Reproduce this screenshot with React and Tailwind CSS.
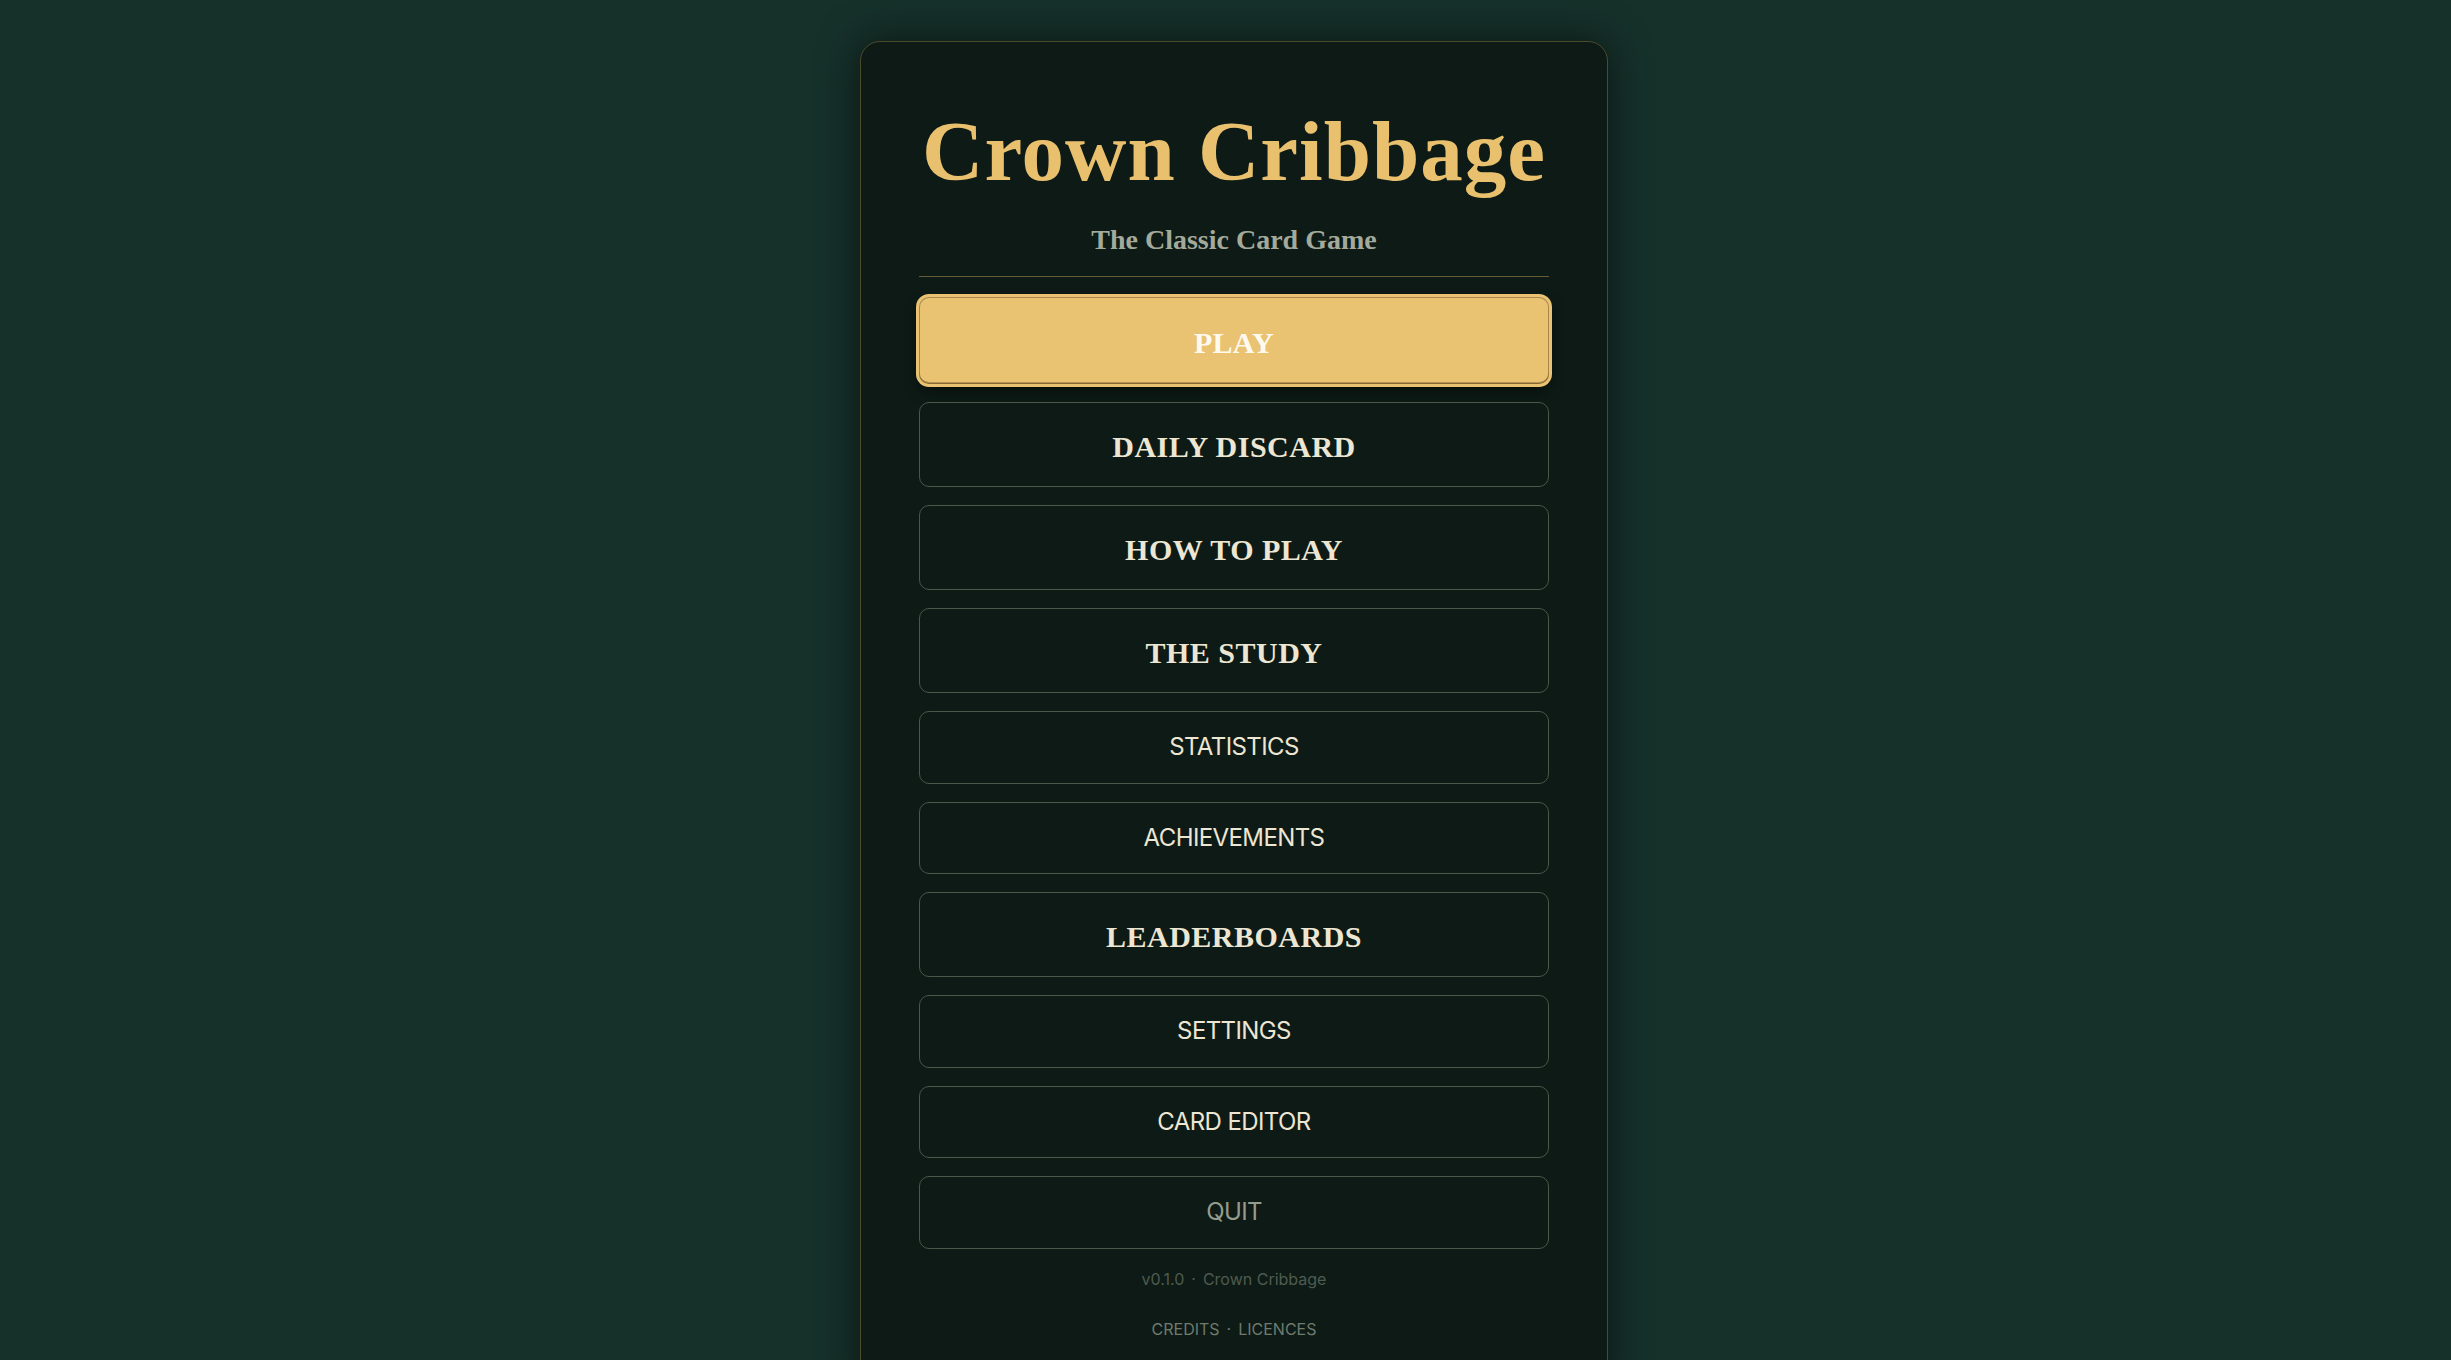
import React from "react";

const serif = "font-['Liberation_Serif','Times_New_Roman',serif]";
const sans = "font-['Inter','Liberation_Sans',sans-serif]";

const menuItems = [
  { label: "PLAY", kind: "primary" },
  { label: "DAILY DISCARD", kind: "serif" },
  { label: "HOW TO PLAY", kind: "serif" },
  { label: "THE STUDY", kind: "serif" },
  { label: "STATISTICS", kind: "sans" },
  { label: "ACHIEVEMENTS", kind: "sans" },
  { label: "LEADERBOARDS", kind: "serif" },
  { label: "SETTINGS", kind: "sans" },
  { label: "CARD EDITOR", kind: "sans" },
  { label: "QUIT", kind: "quit" },
];

function MenuButton({ label, kind }) {
  if (kind === "primary") {
    return (
      <button
        type="button"
        className={`${serif} flex h-[87px] w-full items-center justify-center rounded-[10px] bg-[#e9c272] pt-1 text-[30px] font-bold leading-none tracking-[0.3px] text-[#fffaf0] ring-3 ring-[#e9c272] shadow-[inset_0_0_0_1px_rgba(40,30,10,0.35),inset_0_-2px_0_rgba(90,60,20,0.35),0_6px_14px_rgba(0,0,0,0.55)]`}
      >
        {label}
      </button>
    );
  }

  if (kind === "serif") {
    return (
      <button
        type="button"
        className={`${serif} flex h-[85px] w-full items-center justify-center rounded-[10px] border border-[#4b5749] bg-[#0d1a15] pt-1 text-[30px] font-bold leading-none tracking-[0.5px] text-[#ece6d3]`}
      >
        {label}
      </button>
    );
  }

  return (
    <button
      type="button"
      className={`${sans} flex h-[72.5px] w-full items-center justify-center rounded-[10px] border border-[#4b5749] bg-[#0d1a15] text-[24px] leading-none tracking-[-0.6px] ${
        kind === "quit" ? "text-[#969c8c]" : "text-[#ece6d3]"
      }`}
    >
      {label}
    </button>
  );
}

export default function App() {
  return (
    <div className="flex min-h-screen justify-center bg-[#16302a] pb-10 pl-[17px] pt-[41px]">
      <div className="flex w-[748px] flex-col rounded-[20px] border border-[#4d4a2c] bg-[#0d1a15] px-[58px] pb-[58px] pt-[67px] shadow-[0_0_40px_rgba(0,0,0,0.55)]">
        <h1
          className={`${serif} text-center text-[85px] font-bold leading-[85px] tracking-[1px] text-[#e9c06e]`}
        >
          Crown Cribbage
        </h1>
        <p className={`${serif} mt-[32px] text-center text-[28px] font-bold leading-[28px] text-[#a3aa9c]`}>
          The Classic Card Game
        </p>
        <div className="mt-[22px] h-px w-full bg-[#665a37]" />

        <div className="mt-5 flex flex-col gap-[18px]">
          {menuItems.map((item) => (
            <MenuButton key={item.label} label={item.label} kind={item.kind} />
          ))}
        </div>

        <p className={`${sans} mt-[18px] text-center text-[16px] leading-6 text-[#4f5b50]`}>
          v0.1.0<span className="mx-[7px]">·</span>Crown Cribbage
        </p>
        <p className={`${sans} mt-[26px] text-center text-[16px] leading-6 text-[#6f7a6e]`}>
          CREDITS<span className="mx-[7px]">·</span>LICENCES
        </p>
      </div>
    </div>
  );
}
